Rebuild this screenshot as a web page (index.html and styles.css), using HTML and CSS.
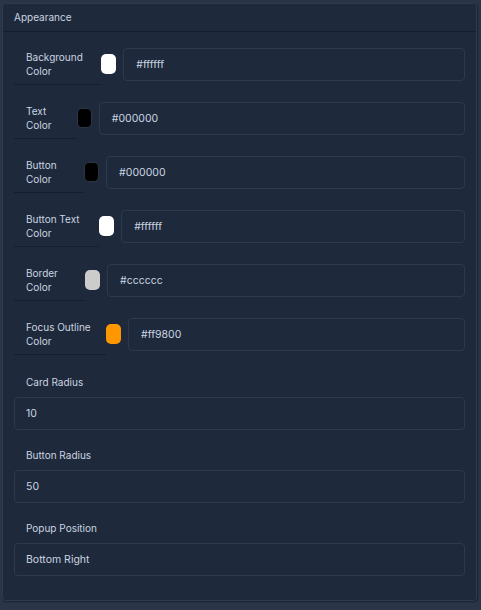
FILE: index.html
```html
<!DOCTYPE html>
<html>
<head>
<meta charset="utf-8">
<link rel="stylesheet" href="styles.css">
</head>
<body>
<div class="card">
  <div class="card-header">Appearance</div>
  <div class="card-body">
    <div class="color-row">
      <label class="row-label">Background Color</label>
      <span class="swatch swatch-white"></span>
      <div class="field">#ffffff</div>
    </div>
    <div class="color-row">
      <label class="row-label">Text Color</label>
      <span class="swatch swatch-black"></span>
      <div class="field">#000000</div>
    </div>
    <div class="color-row">
      <label class="row-label">Button Color</label>
      <span class="swatch swatch-black"></span>
      <div class="field">#000000</div>
    </div>
    <div class="color-row">
      <label class="row-label">Button Text Color</label>
      <span class="swatch swatch-white"></span>
      <div class="field">#ffffff</div>
    </div>
    <div class="color-row">
      <label class="row-label">Border Color</label>
      <span class="swatch swatch-grey"></span>
      <div class="field">#cccccc</div>
    </div>
    <div class="color-row">
      <label class="row-label">Focus Outline Color</label>
      <span class="swatch swatch-orange"></span>
      <div class="field">#ff9800</div>
    </div>
    <div class="stack-row stack-first">
      <label class="stack-label">Card Radius</label>
      <div class="field field-wide">10</div>
    </div>
    <div class="stack-row">
      <label class="stack-label">Button Radius</label>
      <div class="field field-wide">50</div>
    </div>
    <div class="stack-row">
      <label class="stack-label">Popup Position</label>
      <div class="field field-wide">Bottom Right</div>
    </div>
  </div>
</div>
</body>
</html>
```

FILE: styles.css
```css
html, body {
  margin: 0;
  padding: 0;
}
body {
  background: #2a3547;
  font-family: Inter, "Noto Sans", sans-serif;
  font-size: 10px;
  color: #cbd5e1;
  padding: 3px 4px 0 2px;
  height: 610px;
  box-sizing: border-box;
}
.card {
  background: #1e293b;
  border: 1px solid #2e3a4d;
  border-radius: 4px;
  box-shadow: 1px 1px 2px rgba(0,0,0,0.35);
}
.card-header {
  padding: 6px 11px;
  line-height: 15px;
  border-bottom: 1px solid #151e2c;
  color: #cbd5e1;
}
.card-body {
  padding: 11px 11px 13px 11px;
}
.color-row {
  display: flex;
  align-items: center;
  margin-bottom: 12px;
}
.row-label {
  padding: 7px 12px 6px;
  line-height: 14px;
  border-bottom: 1px solid #151e2c;
  color: #cbd5e1;
}
.swatch {
  flex: none;
  width: 15px;
  height: 20px;
  border-radius: 5px;
  margin-right: 7px;
  box-sizing: border-box;
}
.swatch-white { background: #ffffff; }
.swatch-black { background: #000000; border: 1px solid #2b3545; }
.swatch-grey { background: #cccccc; }
.swatch-orange { background: #ff9800; }
.field {
  width: 100%;
  height: 33px;
  box-sizing: border-box;
  border: 1px solid #2d3a4d;
  border-radius: 4px;
  padding: 0 12px;
  display: flex;
  align-items: center;
  font-size: 10.5px;
  color: #cbd5e1;
}
.stack-row {
  margin-bottom: 11px;
}
.stack-first {
  margin-top: 13px;
}
.stack-label {
  display: block;
  padding: 7px 12px 8px;
  line-height: 14px;
}
.field-wide {
  padding: 0 11px;
}
```
